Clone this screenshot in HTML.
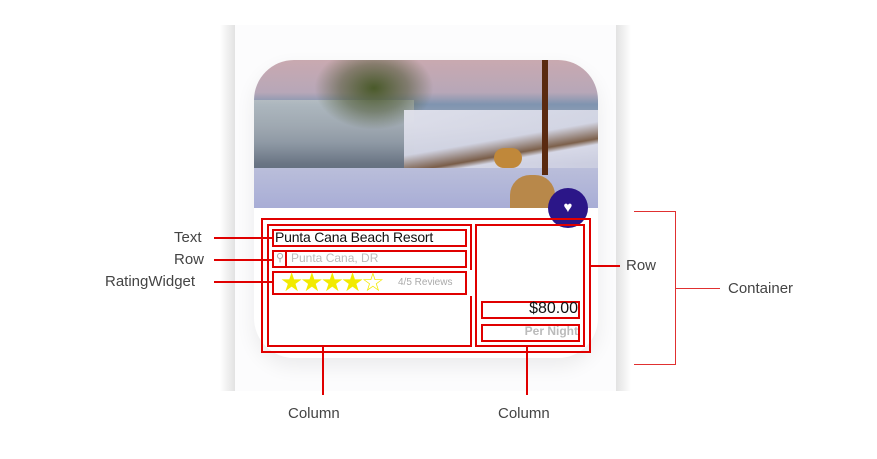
<!DOCTYPE html>
<html><head><style>
*{margin:0;padding:0;box-sizing:border-box}
body{width:877px;height:459px;background:#fff;position:relative;overflow:hidden;font-family:"Liberation Sans",sans-serif}
.a{position:absolute}
.r{position:absolute;border:2px solid #e00000}
.l{position:absolute;background:#e00000}
.lab{position:absolute;font-size:15px;color:#444}
</style></head><body>
<div class="a" style="left:220px;top:25px;width:15px;height:366px;background:linear-gradient(90deg,#fff,#e2e2e2)"></div>
<div class="a" style="left:616px;top:25px;width:15px;height:366px;background:linear-gradient(90deg,#e2e2e2,#fff)"></div>
<div class="a" style="left:235px;top:25px;width:381px;height:366px;background:#fcfcfd"></div>
<div class="a" style="left:254px;top:60px;width:344px;height:298px;border-radius:40px;background:#fff;box-shadow:0 8px 20px rgba(0,0,0,0.07);overflow:hidden">
 <div class="a" style="left:0;top:0;width:344px;height:148px;background:linear-gradient(180deg,#c9a9b0 0%,#b7a7b8 22%,#7f94b0 30%,#a0a8b8 45%,#8a93a8 60%,#6a7290 70%,#a6acd0 80%,#b0b4dc 100%)"></div>
 <div class="a" style="left:0;top:40px;width:160px;height:70px;background:linear-gradient(180deg,#b9c1c4,#8f9aa4 60%,#5f6a78);opacity:.85"></div>
 <div class="a" style="left:60px;top:0;width:120px;height:70px;background:radial-gradient(ellipse at 50% 40%,#4a5a2a 0%,rgba(70,80,40,.5) 40%,transparent 70%)"></div>
 <div class="a" style="left:150px;top:50px;width:194px;height:80px;background:linear-gradient(170deg,#e6e6f0 0%,#d8dae8 40%,#7a5a40 55%,#dfe0ee 60%,#c8cbe0 100%);opacity:.9"></div>
 <div class="a" style="left:0;top:108px;width:344px;height:40px;background:linear-gradient(180deg,#babeda,#a8add6)"></div>
 <div class="a" style="left:288px;top:0;width:6px;height:115px;background:#5a2a10"></div>
 <div class="a" style="left:256px;top:115px;width:45px;height:33px;border-radius:20px 20px 0 0;background:#b8884a"></div>
 <div class="a" style="left:240px;top:88px;width:28px;height:20px;border-radius:10px;background:#c0883a"></div>
</div>
<div class="a" style="left:548px;top:188px;width:40px;height:40px;border-radius:50%;background:#2b1688;color:#fff;font-size:15px;text-align:center;line-height:40px">&#9829;</div>
<div class="r" style="left:261px;top:218px;width:330px;height:135px"></div>
<div class="r" style="left:267px;top:224px;width:205px;height:123px"></div>
<div class="a" style="left:470px;top:270px;width:4px;height:26px;background:#fff"></div>
<div class="r" style="left:475px;top:224px;width:110px;height:123px"></div>
<div class="r" style="left:272px;top:229px;width:195px;height:18px"></div>
<div class="r" style="left:272px;top:250px;width:195px;height:18px"></div>
<div class="l" style="left:285px;top:250px;width:2px;height:18px"></div>
<div class="r" style="left:272px;top:271px;width:195px;height:24px"></div>
<div class="r" style="left:481px;top:301px;width:99px;height:18px"></div>
<div class="r" style="left:481px;top:324px;width:99px;height:18px"></div>
<div class="a" style="left:275px;top:229px;font-size:14px;color:#111;letter-spacing:-0.2px">Punta Cana Beach Resort</div>
<div class="a" style="left:276px;top:251px;font-size:11px;color:#aaa">&#9906;</div>
<div class="a" style="left:291px;top:251px;font-size:12px;color:#bbb">Punta Cana, DR</div>
<div class="a" style="left:280px;top:268px;font-size:26px;line-height:28px;color:#f2ea00;letter-spacing:-3px">★★★★☆</div>
<div class="a" style="left:398px;top:277px;font-size:10px;color:#aaa">4/5 Reviews</div>
<div class="a" style="left:482px;top:300px;width:96px;text-align:right;font-size:16px;color:#111">$80.00</div>
<div class="a" style="left:482px;top:324px;width:96px;text-align:right;font-size:12px;font-weight:bold;color:#bbb">Per Night</div>
<div class="lab" style="left:174px;top:229px">Text</div>
<div class="l" style="left:214px;top:237px;width:59px;height:2px"></div>
<div class="lab" style="left:174px;top:251px">Row</div>
<div class="l" style="left:214px;top:259px;width:59px;height:2px"></div>
<div class="lab" style="left:105px;top:273px">RatingWidget</div>
<div class="l" style="left:214px;top:281px;width:59px;height:2px"></div>
<div class="l" style="left:590px;top:265px;width:30px;height:2px"></div>
<div class="lab" style="left:626px;top:257px">Row</div>
<div class="a" style="left:634px;top:211px;width:42px;height:154px;border:1px solid #e03030;border-left:none"></div>
<div class="a" style="left:676px;top:288px;width:44px;height:1px;background:#e03030"></div>
<div class="lab" style="left:728px;top:280px">Container</div>
<div class="l" style="left:322px;top:346px;width:2px;height:49px"></div>
<div class="lab" style="left:288px;top:405px">Column</div>
<div class="l" style="left:526px;top:346px;width:2px;height:49px"></div>
<div class="lab" style="left:498px;top:405px">Column</div>
</body></html>
